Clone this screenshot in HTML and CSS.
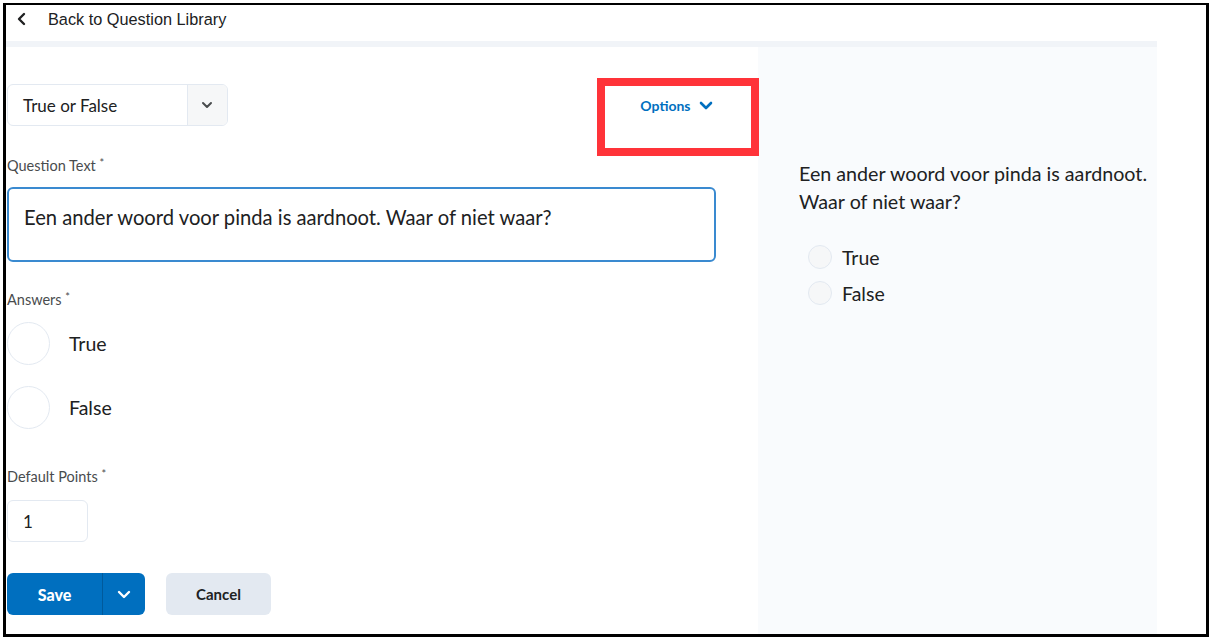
FILE: index.html
```html
<!DOCTYPE html>
<html>
<head>
<meta charset="utf-8">
<link rel="stylesheet" href="styles.css">
</head>
<body>
<div class="frame">
  <div class="topbar">
    <div class="back">
      <svg class="back-icon" width="12" height="14" viewBox="0 0 12 14"><path d="M8 2 L3 7 L8 12" fill="none" stroke="#202122" stroke-width="2.4" stroke-linecap="round" stroke-linejoin="round"/></svg>
      <span>Back to Question Library</span>
    </div>
    <div class="rule"></div>
  </div>
  <div class="main">
    <div class="editor">
      <div class="toprow">
        <div class="select">
          <span class="select-text">True or False</span>
          <span class="select-btn"><svg width="12" height="8" viewBox="0 0 12 8"><path d="M2 2 L6 6 L10 2" fill="none" stroke="#494c4e" stroke-width="2" stroke-linecap="round" stroke-linejoin="round"/></svg></span>
        </div>
        <div class="options-wrap">
          <button class="options">Options <svg width="14" height="9" viewBox="0 0 14 9"><path d="M2 2 L7 7 L12 2" fill="none" stroke="#006fbf" stroke-width="2.6" stroke-linecap="round" stroke-linejoin="round"/></svg></button>
          <div class="annot"></div>
        </div>
      </div>
      <div class="label lbl-q">Question Text <span class="req">*</span></div>
      <div class="textarea">Een ander woord voor pinda is aardnoot. Waar of niet waar?</div>
      <div class="label lbl-a">Answers <span class="req">*</span></div>
      <div class="answers">
        <div class="answer"><span class="bigradio"></span><span>True</span></div>
        <div class="answer"><span class="bigradio"></span><span>False</span></div>
      </div>
      <div class="label lbl-p">Default Points <span class="req">*</span></div>
      <div class="points">1</div>
      <div class="actions">
        <div class="save">
          <span class="save-main">Save</span>
          <span class="save-more"><svg width="14" height="9" viewBox="0 0 14 9"><path d="M2 2 L7 7 L12 2" fill="none" stroke="#ffffff" stroke-width="2.4" stroke-linecap="round" stroke-linejoin="round"/></svg></span>
        </div>
        <div class="cancel">Cancel</div>
      </div>
    </div>
    <div class="preview">
      <div class="preview-q">Een ander woord voor pinda is aardnoot.<br>Waar of niet waar?</div>
      <div class="preview-opts">
        <div class="popt"><span class="smallradio"></span><span>True</span></div>
        <div class="popt"><span class="smallradio"></span><span>False</span></div>
      </div>
    </div>
  </div>
</div>
</body>
</html>
```
FILE: styles.css
```css
* { box-sizing: border-box; }
html, body { margin: 0; padding: 0; background: #fff; }
body { font-family: Lato, "Noto Sans", sans-serif; color: #202122; }

.frame {
  margin: 3px;
  width: 1206px;
  height: 634px;
  border: 3px solid #000;
  border-top-width: 2px;
  overflow: hidden;
  display: flex;
  flex-direction: column;
}

.topbar { width: 1151px; }
.back {
  height: 36px;
  display: flex;
  align-items: center;
  padding-left: 10px;
  padding-bottom: 8px;
  font-family: "Liberation Sans", Arial, sans-serif;
  font-size: 16.3px;
  color: #202122;
}
.back-icon { margin-right: 20px; }
.rule { height: 6px; background: #f1f4f8; }

.main { flex: 1; display: flex; }

.editor { width: 752px; padding-left: 1px; }

.toprow { display: flex; align-items: flex-start; margin-top: 37px; }
.select {
  width: 222px; height: 42px;
  border: 1px solid #e3e9f1;
  border-radius: 6px;
  display: flex;
  overflow: hidden;
}
.select-text { flex: 1; display: flex; align-items: center; padding-left: 15px; font-size: 17px; color: #202122; }
.select-btn { width: 40px; background: #f6f7f8; border-left: 1px solid #e3e9f1; display: flex; align-items: center; justify-content: center; }

.options-wrap { position: relative; margin-left: 369px; width: 162px; height: 42px; display: flex; align-items: center; justify-content: center; }
.options {
  border: 0; background: none; padding: 0; margin-left: -2px;
  font-family: Lato, sans-serif; font-weight: 700; font-size: 14px; color: #006fbf;
  display: flex; align-items: center; gap: 8px;
}
.annot {
  position: absolute; left: 0; top: -6px;
  width: 162px; height: 78px;
  border: 8px solid #ff3339;
}

.label { font-size: 14.5px; line-height: 18px; color: #494c4e; }
.req { font-size: 11px; vertical-align: 4px; }
.lbl-q { margin-top: 28px; }
.textarea {
  margin-top: 12px;
  width: 709px; height: 75px;
  border: 2px solid #3a8ad0;
  border-radius: 6px;
  padding: 15px 0 0 15px;
  font-size: 20.2px; line-height: 26px;
  color: #202122;
}
.lbl-a { margin-top: 26px; }
.answers { margin-top: 12px; display: flex; flex-direction: column; gap: 20px; }
.answer { display: flex; align-items: center; font-size: 19.5px; height: 44px; }
.bigradio { width: 43px; height: 43px; border: 1px solid #e3e9f1; border-radius: 50%; margin-right: 19px; }

.lbl-p { margin-top: 36px; }
.points {
  margin-top: 14px; width: 81px; height: 42px;
  border: 1px solid #e3e9f1; border-radius: 6px;
  display: flex; align-items: center; padding-left: 15px;
  font-size: 17px;
}

.actions { margin-top: 31px; display: flex; gap: 21px; }
.save { display: flex; width: 138px; height: 42px; background: #006fbf; border-radius: 6px; color: #fff; font-weight: 900; font-size: 16px; overflow: hidden; }
.save-main { width: 95px; display: flex; align-items: center; justify-content: center; }
.save-more { flex: 1; border-left: 1px solid #005a9c; display: flex; align-items: center; justify-content: center; }
.cancel { width: 105px; height: 42px; background: #e3e9f1; border-radius: 6px; display: flex; align-items: center; justify-content: center; font-weight: 700; font-size: 15px; color: #202122; }

.preview { width: 399px; background: #f9fbfd; padding: 113px 0 0 41px; }
.preview-q { font-size: 19.7px; line-height: 28px; color: #202122; }
.preview-opts { margin-top: 23px; padding-left: 9px; }
.popt { display: flex; align-items: center; height: 36px; font-size: 19.5px; }
.smallradio { width: 24px; height: 24px; border-radius: 50%; border: 1px solid #e3e9f1; background: #f6f7f8; margin-right: 10px; }
```
